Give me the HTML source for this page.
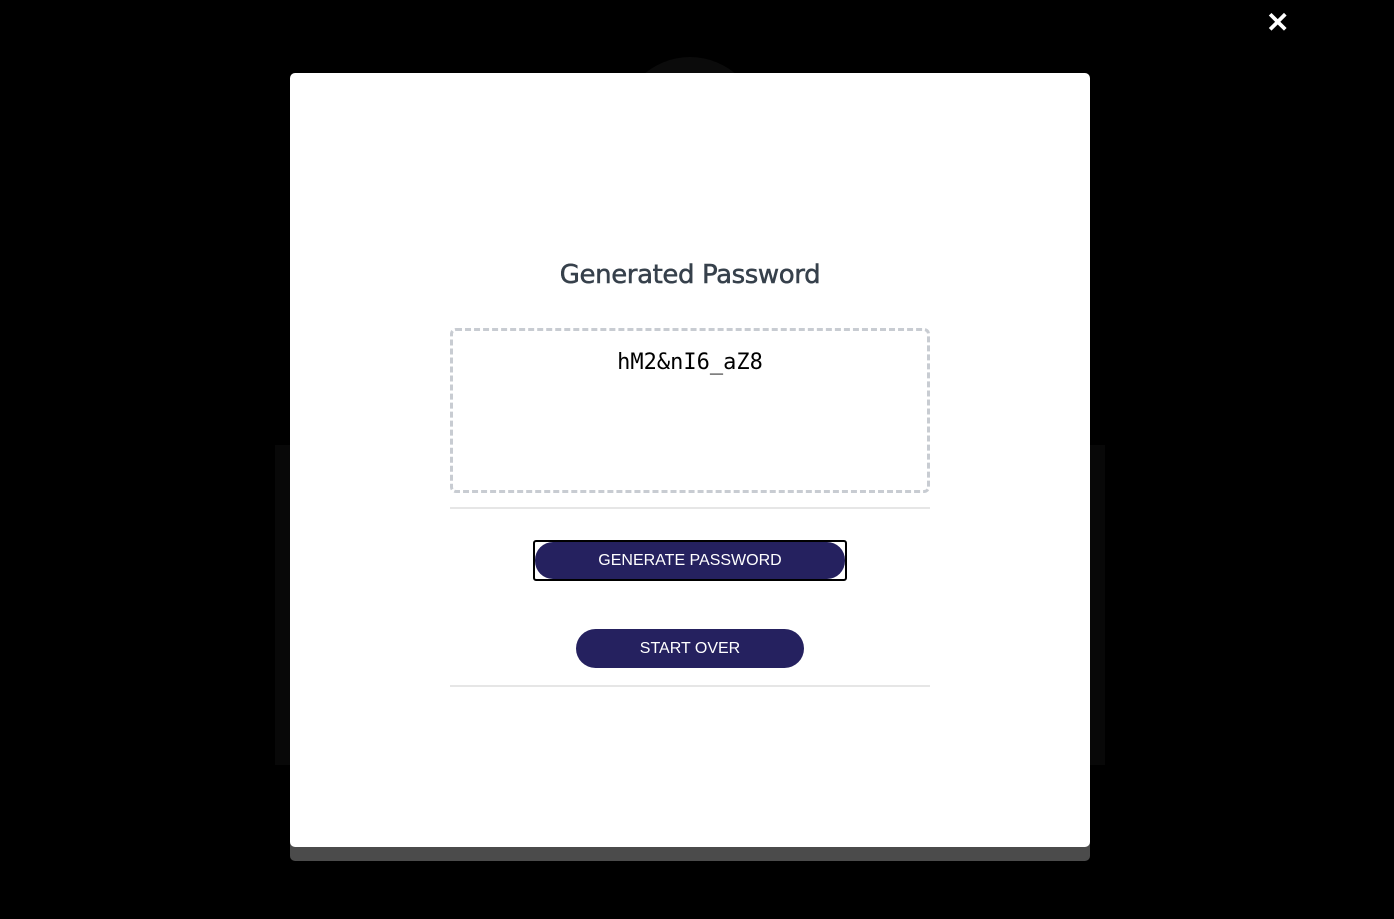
<!DOCTYPE html>
<html><head><style>
body{margin:0;width:1394px;height:919px;background:#000;position:relative;overflow:hidden;font-family:"Liberation Sans",sans-serif}
.circ{position:absolute;left:620px;top:57px;width:140px;height:140px;border-radius:50%;background:#0b0b0b}
.bgrect{position:absolute;left:275px;top:445px;width:830px;height:320px;background:#080808}
.close{position:absolute;left:1266px;top:9px;color:#fff;font-size:28px;font-weight:bold;line-height:28px}
.bar{position:absolute;left:290px;top:840px;width:800px;height:21px;background:#4b4b4b;border-radius:0 0 5px 5px}
.modal{position:absolute;left:290px;top:73px;width:800px;height:774px;background:#fff;border-radius:5px}
h1{position:absolute;left:0;width:800px;top:187px;margin:0;text-align:center;font-family:"DejaVu Sans","Liberation Sans",sans-serif;font-weight:normal;font-size:26px;color:#36404b;letter-spacing:-0.4px;-webkit-text-stroke:0.5px #36404b}
.box{position:absolute;left:160px;top:255px;width:474px;border:3px dashed #c8ccd2;border-radius:6px;text-align:center;font-family:"DejaVu Sans Mono","Liberation Mono",monospace;font-size:22px;padding-top:19px;box-sizing:content-box;height:140px;color:#000}
.hr{position:absolute;left:160px;width:480px;height:2px;background:#e6e6e6}
.btn{position:absolute;background:#25215f;color:#fff;border-radius:20px;text-align:center;font-size:16px}
.gen{left:243px;top:467px;width:314px;height:41px;box-sizing:border-box;border:2px solid #000;border-radius:3px;background:#fff}
.gen div{position:absolute;inset:0;background:#25215f;border-radius:18px;color:#fff;line-height:37px;text-align:center;font-size:16px}
</style></head><body>
<div class="circ"></div><div class="bgrect"></div>
<div class="close">✕</div>
<div class="bar"></div>
<div class="modal">
<h1>Generated Password</h1>
<div class="box">hM2&amp;nI6_aZ8</div>
<div class="hr" style="top:434px"></div>
<div class="btn gen"><div>GENERATE PASSWORD</div></div>
<div class="btn" style="left:286px;top:556px;width:228px;height:39px;line-height:39px">START OVER</div>
<div class="hr" style="top:612px"></div>
</div>
</body></html>
